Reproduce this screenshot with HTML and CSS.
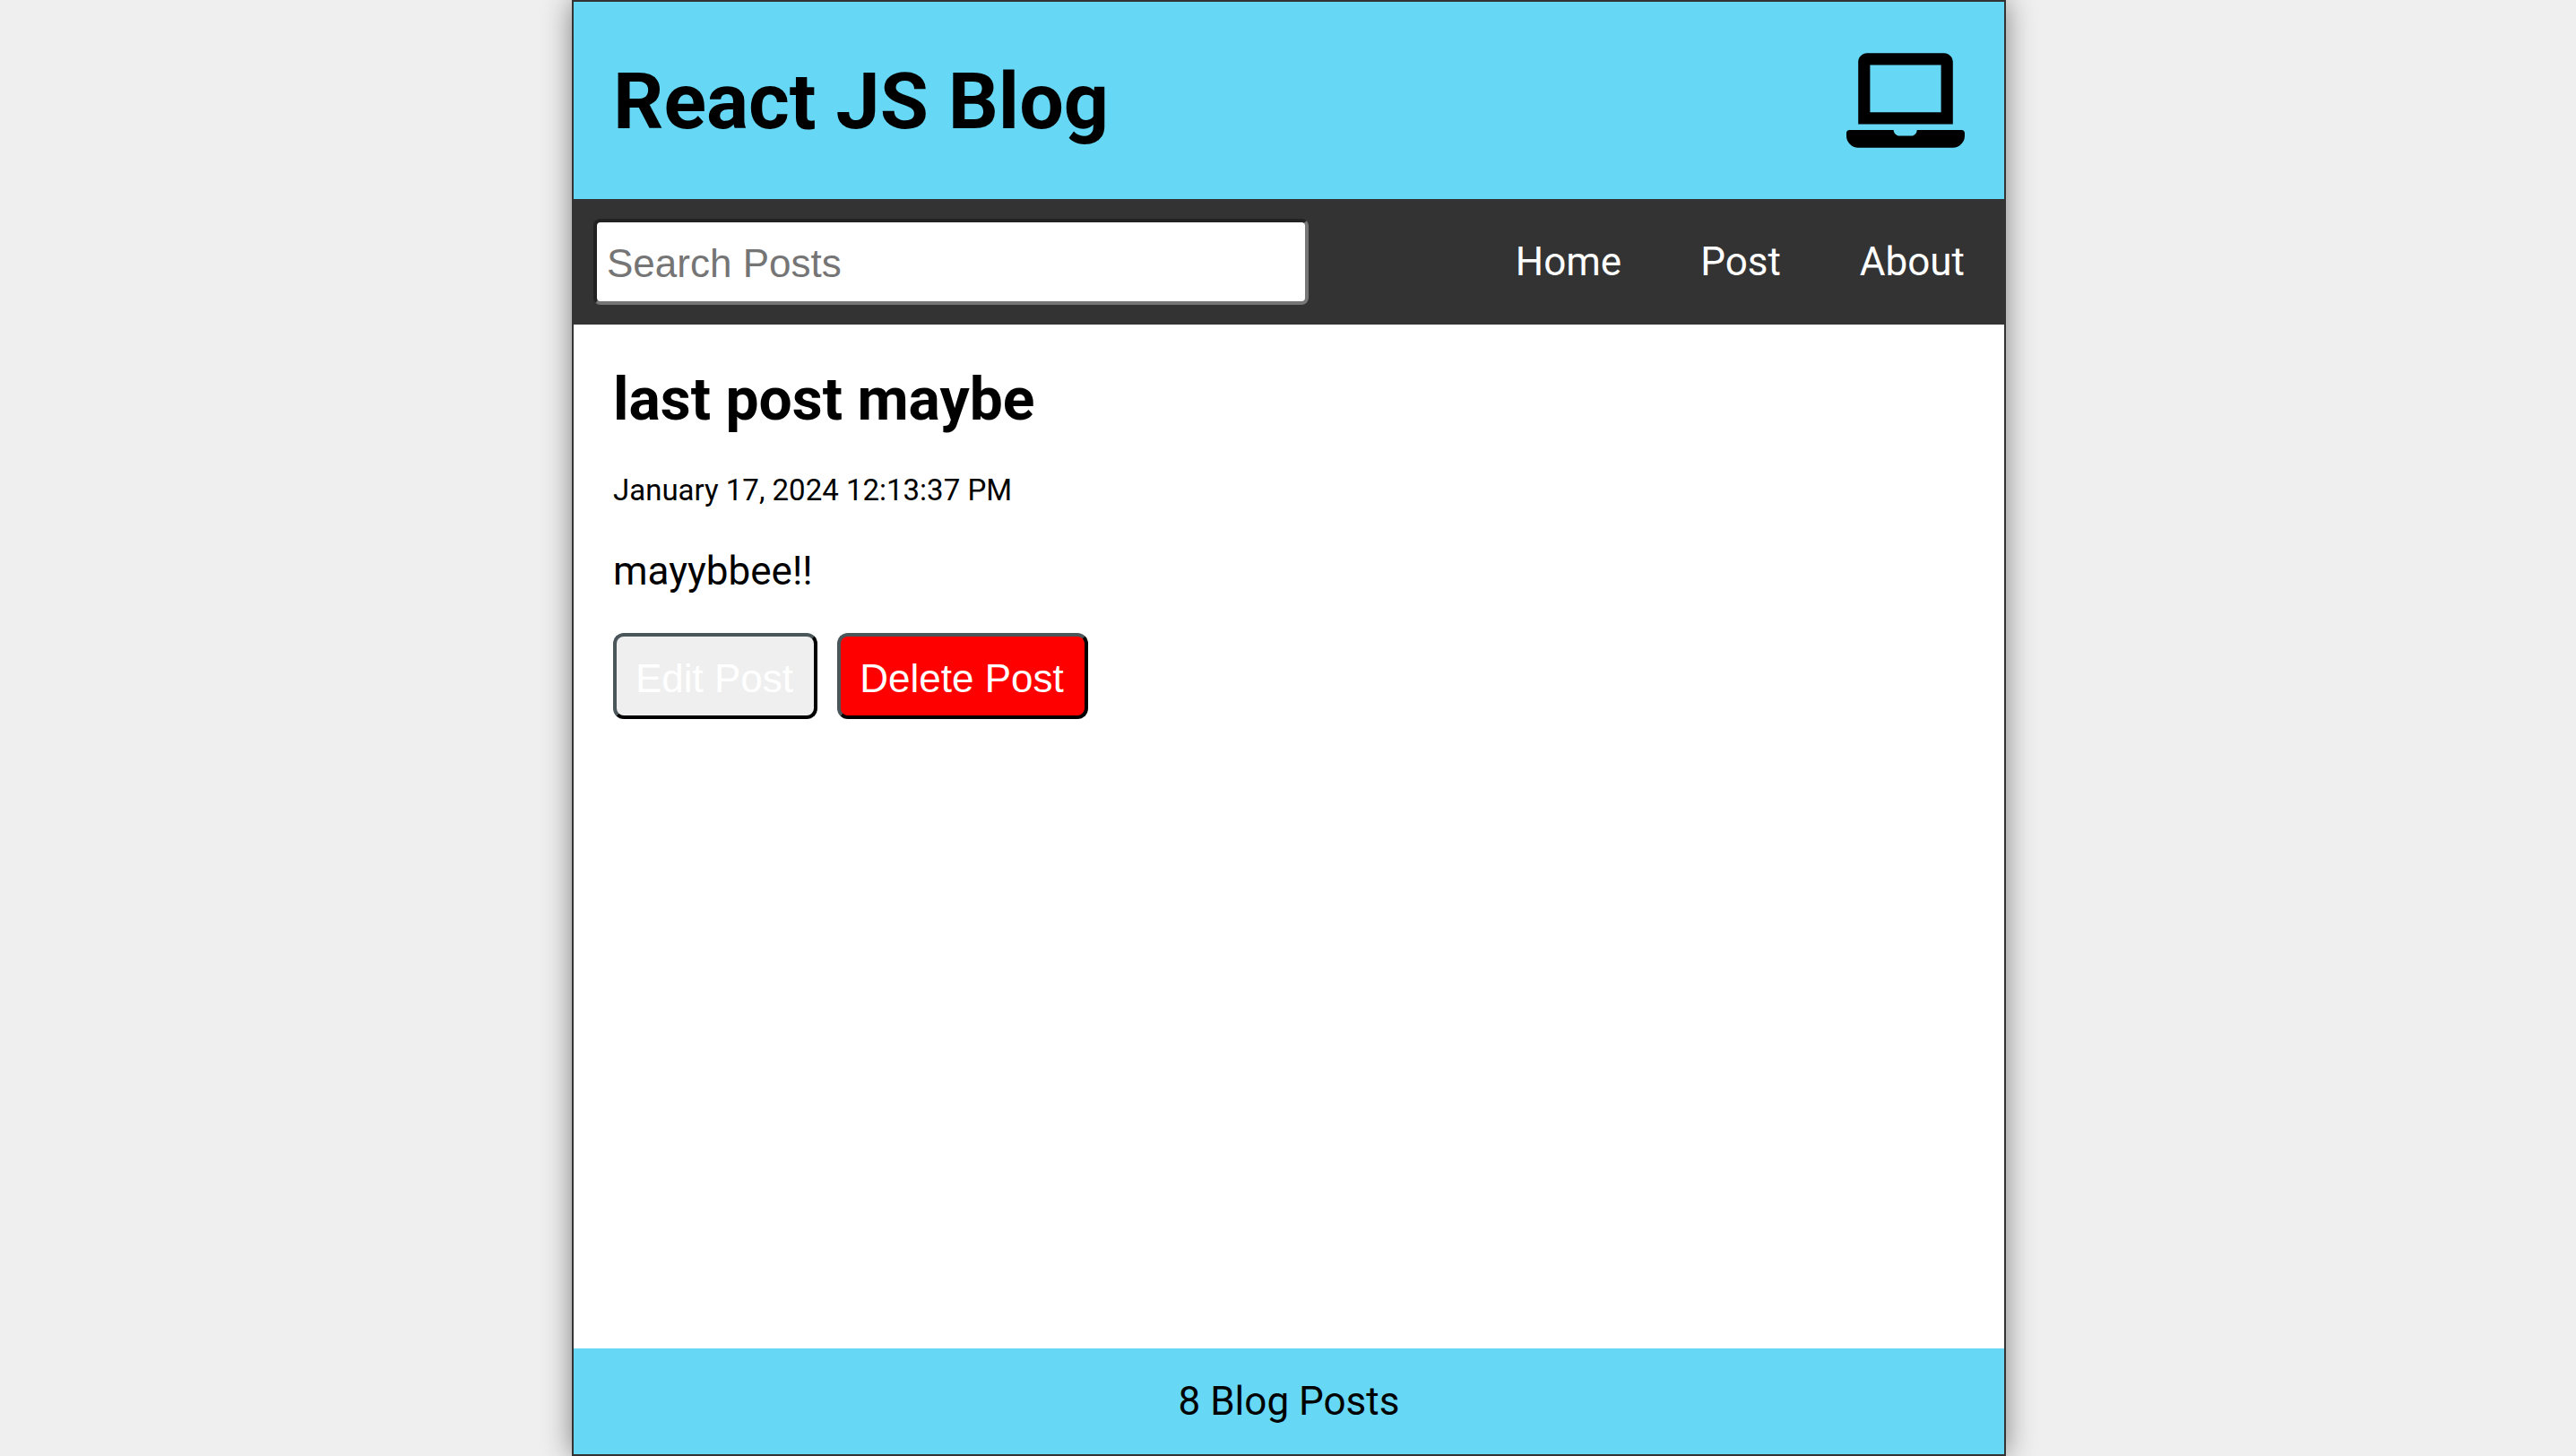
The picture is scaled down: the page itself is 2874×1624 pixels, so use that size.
FILE: index.html
```html
<!DOCTYPE html>
<html lang="en">
<head>
<meta charset="utf-8">
<title>React JS Blog</title>
<link rel="stylesheet" href="styles.css">
</head>
<body>
<div class="app">
  <header class="header">
    <h1 class="title">React JS Blog</h1>
    <svg class="laptop" viewBox="0 0 640 512" aria-hidden="true"><path d="M624 416H381.54c-.74 19.81-14.71 32-32.74 32H288c-18.69 0-33.02-17.47-32.77-32H16c-8.8 0-16 7.2-16 16v16c0 35.2 28.8 64 64 64h512c35.2 0 64-28.8 64-64v-16c0-8.8-7.2-16-16-16zM576 48c0-26.4-21.6-48-48-48H112C85.6 0 64 21.6 64 48v336h512V48zm-64 272H128V64h384v256z"/></svg>
  </header>
  <nav class="nav">
    <form class="search"><input class="search-input" type="text" placeholder="Search Posts"></form>
    <ul class="links">
      <li><a href="#">Home</a></li>
      <li><a href="#">Post</a></li>
      <li><a href="#">About</a></li>
    </ul>
  </nav>
  <main class="main">
    <article class="post">
      <h2 class="post-title">last post maybe</h2>
      <p class="post-date">January 17, 2024 12:13:37 PM</p>
      <p class="post-body">mayybbee!!</p>
      <div class="actions">
        <button class="btn btn-edit" type="button">Edit Post</button>
        <button class="btn btn-delete" type="button">Delete Post</button>
      </div>
    </article>
  </main>
  <footer class="footer">8 Blog Posts</footer>
</div>
</body>
</html>
```

FILE: styles.css
```css
* { margin: 0; padding: 0; box-sizing: border-box; }
html, body { height: 100%; }
body {
  background: #efefef;
  font-family: Roboto, sans-serif;
  display: flex;
  justify-content: center;
  padding-left: 2px;
}
.app {
  width: 1600px;
  height: 1624px;
  background: #fff;
  border: 2px solid #333;
  box-shadow: 0 0 30px gray;
  display: flex;
  flex-direction: column;
}
.header {
  height: 220px;
  background: #66d8f5;
  padding: 0 44px;
  display: flex;
  align-items: center;
  justify-content: space-between;
}
.title { font-size: 88px; font-weight: 700; color: #000; }
.laptop { width: 132px; height: 106px; fill: #000; }
.nav {
  height: 140px;
  background: #333;
  display: flex;
  align-items: center;
  justify-content: space-between;
  padding: 0 44px 0 22px;
}
.search { width: 798px; }
.search-input {
  display: block;
  width: 100%;
  height: 96px;
  font-family: "Liberation Sans", Arial, sans-serif;
  font-size: 44px;
  padding: 3px 11px 0;
  border: 4px solid;
  border-color: #222 #767676 #767676 #222;
  border-radius: 8px;
  background: #fff;
  outline: none;
}
.search-input::placeholder { color: #757575; }
.links { list-style: none; display: flex; gap: 88px; }
.links a { color: #fff; text-decoration: none; font-size: 44px; }
.main { flex: 1; padding: 44px; }
.post-title { font-size: 66px; font-weight: 700; line-height: 1.2; }
.post-date { font-size: 33px; margin-top: 42px; line-height: 1.2; }
.post-body { font-size: 44px; margin-top: 44px; line-height: 1.2; }
.actions { display: flex; gap: 22px; margin-top: 42px; }
.btn {
  height: 96px;
  padding: 7px 2px 0 0;
  font-family: "Liberation Sans", Arial, sans-serif;
  font-size: 44px;
  white-space: nowrap;
  color: #fff;
  border: 4px solid;
  border-color: #4a565a #000 #000 #4a565a;
  border-radius: 12px;
}
.btn-edit { background: #efefef; width: 228px; }
.btn-delete { background: #f00; width: 280px; }
.footer {
  height: 118px;
  background: #66d8f5;
  display: flex;
  align-items: center;
  justify-content: center;
  font-size: 44px;
}
```
